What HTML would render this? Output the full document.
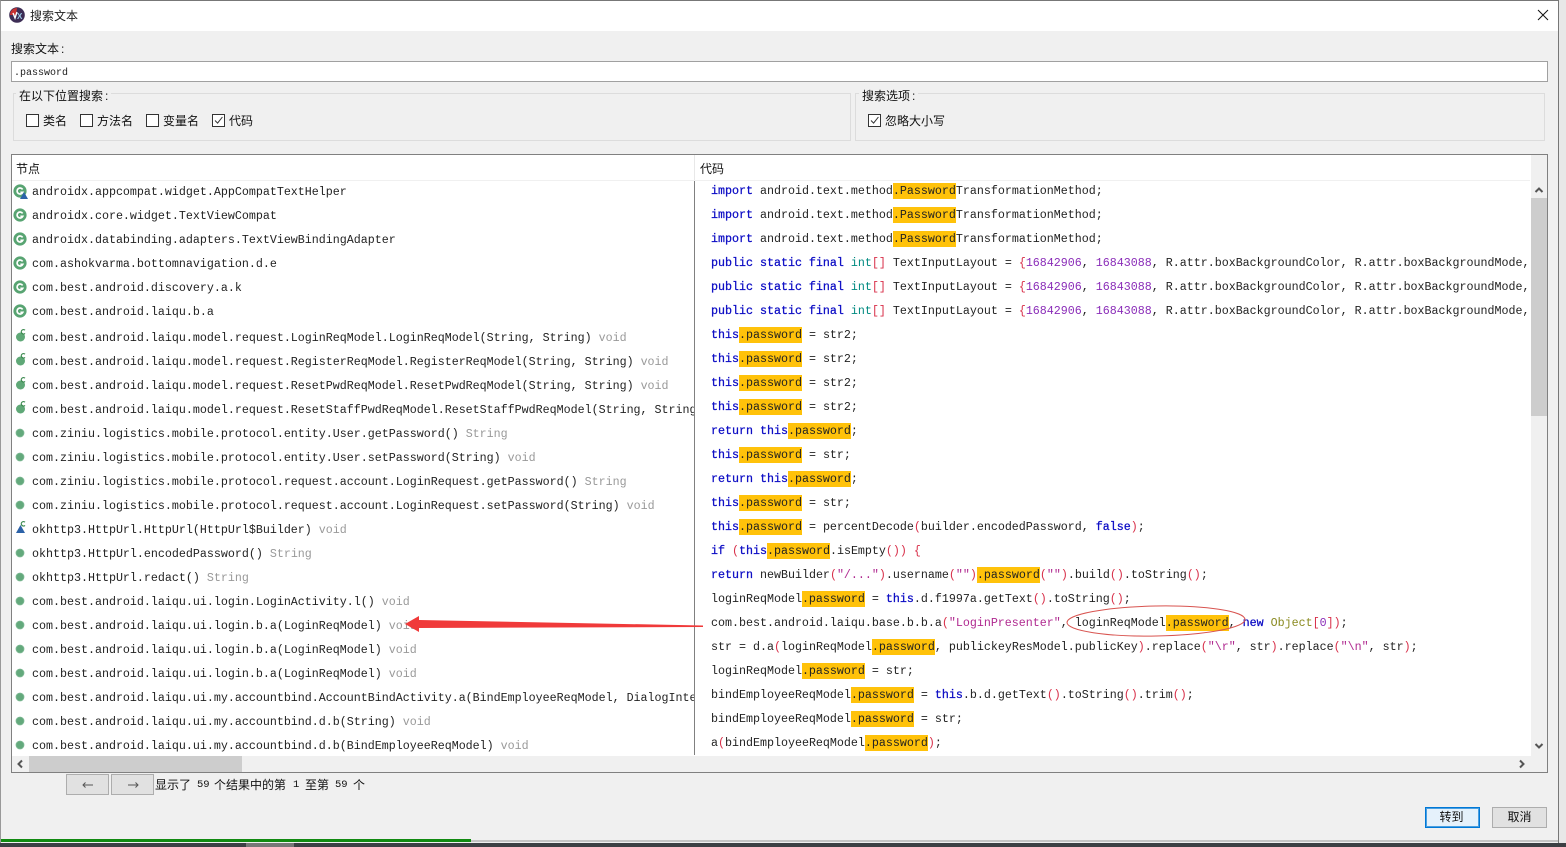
<!DOCTYPE html>
<html><head><meta charset="utf-8"><title>搜索文本</title>
<style>
*{box-sizing:border-box}
html,body{margin:0;padding:0;width:1566px;height:847px;overflow:hidden;background:#e8e8e8}
body{position:relative;font-family:"Liberation Sans","Noto Sans CJK SC",sans-serif;font-size:12px;color:#111}
.a{position:absolute}
.l{position:absolute;white-space:nowrap;line-height:16px;height:16px}
.m{font-family:"Liberation Mono","Noto Sans CJK SC",monospace;font-size:11.67px;white-space:pre;color:#222}
.m i{font-style:normal;color:#999}
.k{color:#0b0bc4;-webkit-text-stroke:.25px #0b0bc4}.t{color:#008a80}.p{color:#d8304a}.n{color:#8a2cb8}.s{color:#b02a90}.o{color:#8a8a20}
.h{background:#ffc20a;display:inline-block;height:16px;color:#222}
.cb{position:absolute;width:13px;height:13px;border:1px solid #333;background:#fff}
.btn{position:absolute;border:1px solid #adadad;background:#e1e1e1;text-align:center}
.grp{position:absolute;border:1px solid #dcdcdc;top:93px;height:48px}
.f{font-family:"Liberation Mono",monospace;font-size:10.5px}
.c{margin-left:2px}
</style></head><body>

<svg width="0" height="0" style="position:absolute"><defs>
<symbol id="g" viewBox="0 0 14 14"><circle cx="7" cy="7" r="6.6" fill="#58a472"/><path d="M9.600 5.400A3 3 0 1 0 9.800 8.300H7.400" fill="none" stroke="#fff" stroke-width="1.7"/></symbol>
<symbol id="d" viewBox="0 0 10 10"><circle cx="5" cy="5" r="4" fill="#63a97c" stroke="#7fb995" stroke-width=".8"/></symbol>
<symbol id="c" viewBox="0 0 12 16"><circle cx="5.500" cy="9" r="4.500" fill="#5fa877"/><path d="M10 2.200A2.200 2.200 0 1 0 10 5.400" fill="none" stroke="#3d8a50" stroke-width="1.200"/></symbol>
<symbol id="b" viewBox="0 0 12 16"><path d="M1 13L5.500 5 10 13z" fill="#2c62a8"/><path d="M10 2.200A2.200 2.200 0 1 0 10 5.400" fill="none" stroke="#3d8a50" stroke-width="1.200"/></symbol>
</defs></svg>

<!-- window -->
<div class="a" style="left:0;top:0;width:1559px;height:843px;background:#f0f0f0;border:1px solid #777;border-bottom:none;border-left-color:#999"></div>
<div class="a" style="top:1px;left:1px;width:1557px;height:30px;background:#fff"></div>
<div class="a" style="left:1px;top:839px;width:470px;height:3px;background:#118a11"></div>
<div class="a" style="left:471px;top:840px;width:1087px;height:2px;background:#c4c4c4"></div>
<div class="a" style="left:0;top:843px;width:1566px;height:4px;background:#3c4044"></div>
<div class="a" style="left:246px;top:843px;width:48px;height:4px;background:#777"></div>

<!-- title -->
<svg class="a" style="left:9px;top:7px" width="16" height="16" viewBox="0 0 16 16"><circle cx="8" cy="8" r="7.800" fill="#3d2d55"/><path d="M1 8a7 7 0 0 1 7-7L7 8z" fill="#c83232"/><path d="M4 6l2 5 2-6" fill="none" stroke="#fff" stroke-width="1.400"/><text x="8" y="12" font-family="Liberation Sans" font-size="8" font-weight="bold" fill="#9ccbe8">X</text></svg>
<div class="l" style="left:30px;top:8px;color:#222">搜索文本</div>
<svg class="a" style="left:1537px;top:9px" width="12" height="12" viewBox="0 0 12 12"><path d="M1 1l10 10M11 1L1 11" stroke="#111" stroke-width="1" fill="none"/></svg>

<!-- search -->
<div class="l" style="left:11px;top:41px">搜索文本<span class="c">:</span></div>
<div class="a" style="left:11px;top:61px;width:1537px;height:21px;background:#fff;border:1px solid #a0a0a0"></div>
<div class="l" style="left:14px;top:66px;font-family:'Liberation Mono',monospace;font-size:10px;color:#222">.password</div>

<!-- groups -->
<div class="grp" style="left:13px;width:838px"></div>
<div class="grp" style="left:855px;width:690px"></div>
<div class="l" style="left:16px;top:88px;background:#f0f0f0;padding:0 3px">在以下位置搜索<span class="c">:</span></div>
<div class="l" style="left:859px;top:88px;background:#f0f0f0;padding:0 3px">搜索选项<span class="c">:</span></div>
<div class="cb" style="left:26px;top:114px"></div><div class="l" style="left:43px;top:113px">类名</div>
<div class="cb" style="left:80px;top:114px"></div><div class="l" style="left:97px;top:113px">方法名</div>
<div class="cb" style="left:146px;top:114px"></div><div class="l" style="left:163px;top:113px">变量名</div>
<div class="cb" style="left:212px;top:114px"><svg class="a" style="left:0;top:0" width="11" height="11" viewBox="0 0 11 11"><path d="M2 5.500l2.600 2.600L9.400 2" fill="none" stroke="#333" stroke-width="1"/></svg></div><div class="l" style="left:229px;top:113px">代码</div>
<div class="cb" style="left:868px;top:114px"><svg class="a" style="left:0;top:0" width="11" height="11" viewBox="0 0 11 11"><path d="M2 5.500l2.600 2.600L9.400 2" fill="none" stroke="#333" stroke-width="1"/></svg></div><div class="l" style="left:885px;top:113px">忽略大小写</div>

<!-- results -->
<div class="a" style="left:11px;top:154px;width:1537px;height:619px;background:#fff;border:1px solid #808080"></div>
<div class="a" style="left:12px;top:180px;width:1518px;height:1px;background:#f0f0f0"></div>
<div class="a" style="left:694px;top:155px;width:1px;height:25px;background:#e8e8e8"></div>
<div class="a" style="left:694px;top:181px;width:1px;height:574px;background:#808080"></div>
<div class="l" style="left:16px;top:161px">节点</div>
<div class="l" style="left:700px;top:161px">代码</div>

<!-- vertical scrollbar -->
<div class="a" style="left:1531px;top:155px;width:16px;height:601px;background:#f0f0f0"></div>
<div class="a" style="left:1531px;top:198px;width:16px;height:218px;background:#cdcdcd"></div>
<svg class="a" style="left:1534px;top:186px" width="10" height="8" viewBox="0 0 10 8"><path d="M1.500 6L5 2.500 8.500 6" fill="none" stroke="#555" stroke-width="2"/></svg>
<svg class="a" style="left:1534px;top:742px" width="10" height="8" viewBox="0 0 10 8"><path d="M1.500 2L5 5.500 8.500 2" fill="none" stroke="#555" stroke-width="2"/></svg>
<!-- horizontal scrollbar -->
<div class="a" style="left:12px;top:756px;width:1535px;height:16px;background:#f0f0f0"></div>
<div class="a" style="left:29px;top:756px;width:213px;height:16px;background:#cdcdcd"></div>
<svg class="a" style="left:16px;top:759px" width="8" height="10" viewBox="0 0 8 10"><path d="M6 1.500L2.500 5 6 8.500" fill="none" stroke="#555" stroke-width="2"/></svg>
<svg class="a" style="left:1518px;top:759px" width="8" height="10" viewBox="0 0 8 10"><path d="M2 1.500L5.500 5 2 8.500" fill="none" stroke="#555" stroke-width="2"/></svg>

<!-- left list -->
<div class="a" style="left:12px;top:181px;width:682px;height:575px;overflow:hidden">
<svg class="a" style="left:1px;top:3px" width="14" height="14"><use href="#g"/></svg><svg class="a" style="left:8px;top:11px" width="8" height="7" viewBox="0 0 8 7"><path d="M0 7L4 0l4 7z" fill="#2c62a8"/></svg>
<svg class="a" style="left:1px;top:27px" width="14" height="14"><use href="#g"/></svg>
<svg class="a" style="left:1px;top:51px" width="14" height="14"><use href="#g"/></svg>
<svg class="a" style="left:1px;top:75px" width="14" height="14"><use href="#g"/></svg>
<svg class="a" style="left:1px;top:99px" width="14" height="14"><use href="#g"/></svg>
<svg class="a" style="left:1px;top:123px" width="14" height="14"><use href="#g"/></svg>
<svg class="a" style="left:3px;top:147px" width="12" height="16"><use href="#c"/></svg>
<svg class="a" style="left:3px;top:171px" width="12" height="16"><use href="#c"/></svg>
<svg class="a" style="left:3px;top:195px" width="12" height="16"><use href="#c"/></svg>
<svg class="a" style="left:3px;top:219px" width="12" height="16"><use href="#c"/></svg>
<svg class="a" style="left:3px;top:247px" width="10" height="10"><use href="#d"/></svg>
<svg class="a" style="left:3px;top:271px" width="10" height="10"><use href="#d"/></svg>
<svg class="a" style="left:3px;top:295px" width="10" height="10"><use href="#d"/></svg>
<svg class="a" style="left:3px;top:319px" width="10" height="10"><use href="#d"/></svg>
<svg class="a" style="left:3px;top:339px" width="12" height="16"><use href="#b"/></svg>
<svg class="a" style="left:3px;top:367px" width="10" height="10"><use href="#d"/></svg>
<svg class="a" style="left:3px;top:391px" width="10" height="10"><use href="#d"/></svg>
<svg class="a" style="left:3px;top:415px" width="10" height="10"><use href="#d"/></svg>
<svg class="a" style="left:3px;top:439px" width="10" height="10"><use href="#d"/></svg>
<svg class="a" style="left:3px;top:463px" width="10" height="10"><use href="#d"/></svg>
<svg class="a" style="left:3px;top:487px" width="10" height="10"><use href="#d"/></svg>
<svg class="a" style="left:3px;top:511px" width="10" height="10"><use href="#d"/></svg>
<svg class="a" style="left:3px;top:535px" width="10" height="10"><use href="#d"/></svg>
<svg class="a" style="left:3px;top:559px" width="10" height="10"><use href="#d"/></svg>
<div class="l m" style="left:20px;top:3px">androidx.appcompat.widget.AppCompatTextHelper</div>
<div class="l m" style="left:20px;top:27px">androidx.core.widget.TextViewCompat</div>
<div class="l m" style="left:20px;top:51px">androidx.databinding.adapters.TextViewBindingAdapter</div>
<div class="l m" style="left:20px;top:75px">com.ashokvarma.bottomnavigation.d.e</div>
<div class="l m" style="left:20px;top:99px">com.best.android.discovery.a.k</div>
<div class="l m" style="left:20px;top:123px">com.best.android.laiqu.b.a</div>
<div class="l m" style="left:20px;top:149px">com.best.android.laiqu.model.request.LoginReqModel.LoginReqModel(String, String) <i>void</i></div>
<div class="l m" style="left:20px;top:173px">com.best.android.laiqu.model.request.RegisterReqModel.RegisterReqModel(String, String) <i>void</i></div>
<div class="l m" style="left:20px;top:197px">com.best.android.laiqu.model.request.ResetPwdReqModel.ResetPwdReqModel(String, String) <i>void</i></div>
<div class="l m" style="left:20px;top:221px">com.best.android.laiqu.model.request.ResetStaffPwdReqModel.ResetStaffPwdReqModel(String, String) <i>void</i></div>
<div class="l m" style="left:20px;top:245px">com.ziniu.logistics.mobile.protocol.entity.User.getPassword() <i>String</i></div>
<div class="l m" style="left:20px;top:269px">com.ziniu.logistics.mobile.protocol.entity.User.setPassword(String) <i>void</i></div>
<div class="l m" style="left:20px;top:293px">com.ziniu.logistics.mobile.protocol.request.account.LoginRequest.getPassword() <i>String</i></div>
<div class="l m" style="left:20px;top:317px">com.ziniu.logistics.mobile.protocol.request.account.LoginRequest.setPassword(String) <i>void</i></div>
<div class="l m" style="left:20px;top:341px">okhttp3.HttpUrl.HttpUrl(HttpUrl$Builder) <i>void</i></div>
<div class="l m" style="left:20px;top:365px">okhttp3.HttpUrl.encodedPassword() <i>String</i></div>
<div class="l m" style="left:20px;top:389px">okhttp3.HttpUrl.redact() <i>String</i></div>
<div class="l m" style="left:20px;top:413px">com.best.android.laiqu.ui.login.LoginActivity.l() <i>void</i></div>
<div class="l m" style="left:20px;top:437px">com.best.android.laiqu.ui.login.b.a(LoginReqModel) <i>void</i></div>
<div class="l m" style="left:20px;top:461px">com.best.android.laiqu.ui.login.b.a(LoginReqModel) <i>void</i></div>
<div class="l m" style="left:20px;top:485px">com.best.android.laiqu.ui.login.b.a(LoginReqModel) <i>void</i></div>
<div class="l m" style="left:20px;top:509px">com.best.android.laiqu.ui.my.accountbind.AccountBindActivity.a(BindEmployeeReqModel, DialogInterface) <i>void</i></div>
<div class="l m" style="left:20px;top:533px">com.best.android.laiqu.ui.my.accountbind.d.b(String) <i>void</i></div>
<div class="l m" style="left:20px;top:557px">com.best.android.laiqu.ui.my.accountbind.d.b(BindEmployeeReqModel) <i>void</i></div>
</div>

<!-- code -->
<div class="a" style="left:695px;top:181px;width:835px;height:575px;overflow:hidden">
<div class="l m" style="left:16px;top:2px"><span class="k">import</span> android.text.method<span class="h">.Password</span>TransformationMethod;</div>
<div class="l m" style="left:16px;top:26px"><span class="k">import</span> android.text.method<span class="h">.Password</span>TransformationMethod;</div>
<div class="l m" style="left:16px;top:50px"><span class="k">import</span> android.text.method<span class="h">.Password</span>TransformationMethod;</div>
<div class="l m" style="left:16px;top:74px"><span class="k">public static final</span> <span class="t">int</span><span class="p">[]</span> TextInputLayout = <span class="p">{</span><span class="n">16842906</span>, <span class="n">16843088</span>, R.attr.boxBackgroundColor, R.attr.boxBackgroundMode, R.attr</div>
<div class="l m" style="left:16px;top:98px"><span class="k">public static final</span> <span class="t">int</span><span class="p">[]</span> TextInputLayout = <span class="p">{</span><span class="n">16842906</span>, <span class="n">16843088</span>, R.attr.boxBackgroundColor, R.attr.boxBackgroundMode, R.attr</div>
<div class="l m" style="left:16px;top:122px"><span class="k">public static final</span> <span class="t">int</span><span class="p">[]</span> TextInputLayout = <span class="p">{</span><span class="n">16842906</span>, <span class="n">16843088</span>, R.attr.boxBackgroundColor, R.attr.boxBackgroundMode, R.attr</div>
<div class="l m" style="left:16px;top:146px"><span class="k">this</span><span class="h">.password</span> = str2;</div>
<div class="l m" style="left:16px;top:170px"><span class="k">this</span><span class="h">.password</span> = str2;</div>
<div class="l m" style="left:16px;top:194px"><span class="k">this</span><span class="h">.password</span> = str2;</div>
<div class="l m" style="left:16px;top:218px"><span class="k">this</span><span class="h">.password</span> = str2;</div>
<div class="l m" style="left:16px;top:242px"><span class="k">return this</span><span class="h">.password</span>;</div>
<div class="l m" style="left:16px;top:266px"><span class="k">this</span><span class="h">.password</span> = str;</div>
<div class="l m" style="left:16px;top:290px"><span class="k">return this</span><span class="h">.password</span>;</div>
<div class="l m" style="left:16px;top:314px"><span class="k">this</span><span class="h">.password</span> = str;</div>
<div class="l m" style="left:16px;top:338px"><span class="k">this</span><span class="h">.password</span> = percentDecode<span class="p">(</span>builder.encodedPassword, <span class="k">false</span><span class="p">)</span>;</div>
<div class="l m" style="left:16px;top:362px"><span class="k">if</span> <span class="p">(</span><span class="k">this</span><span class="h">.password</span>.isEmpty<span class="p">())</span> <span class="p">{</span></div>
<div class="l m" style="left:16px;top:386px"><span class="k">return</span> newBuilder<span class="p">(</span><span class="s">"/..."</span><span class="p">)</span>.username<span class="p">(</span><span class="s">""</span><span class="p">)</span><span class="h">.password</span><span class="p">(</span><span class="s">""</span><span class="p">)</span>.build<span class="p">()</span>.toString<span class="p">()</span>;</div>
<div class="l m" style="left:16px;top:410px">loginReqModel<span class="h">.password</span> = <span class="k">this</span>.d.f1997a.getText<span class="p">()</span>.toString<span class="p">()</span>;</div>
<div class="l m" style="left:16px;top:434px">com.best.android.laiqu.base.b.b.a<span class="p">(</span><span class="s">"LoginPresenter"</span>, loginReqModel<span class="h">.password</span>, <span class="k">new</span> <span class="o">Object</span><span class="p">[</span><span class="n">0</span><span class="p">])</span>;</div>
<div class="l m" style="left:16px;top:458px">str = d.a<span class="p">(</span>loginReqModel<span class="h">.password</span>, publickeyResModel.publicKey<span class="p">)</span>.replace<span class="p">(</span><span class="s">"\r"</span>, str<span class="p">)</span>.replace<span class="p">(</span><span class="s">"\n"</span>, str<span class="p">)</span>;</div>
<div class="l m" style="left:16px;top:482px">loginReqModel<span class="h">.password</span> = str;</div>
<div class="l m" style="left:16px;top:506px">bindEmployeeReqModel<span class="h">.password</span> = <span class="k">this</span>.b.d.getText<span class="p">()</span>.toString<span class="p">()</span>.trim<span class="p">()</span>;</div>
<div class="l m" style="left:16px;top:530px">bindEmployeeReqModel<span class="h">.password</span> = str;</div>
<div class="l m" style="left:16px;top:554px">a<span class="p">(</span>bindEmployeeReqModel<span class="h">.password</span><span class="p">)</span>;</div>
</div>

<!-- annotations -->
<svg class="a" style="left:0;top:0;pointer-events:none" width="1566" height="847">
<ellipse cx="1156" cy="621" rx="89" ry="15" transform="rotate(-1 1156 621)" fill="none" stroke="#d8534f" stroke-width="1"/>
<path d="M405 624L419 616 419 620 703 625.500 703 627 419 628 419 632Z" fill="#f03a3a"/>
</svg>

<!-- pager -->
<div class="btn" style="left:66px;top:774px;width:43px;height:21px"><svg class="a" style="left:14px;top:6px" width="14" height="8" viewBox="0 0 14 8"><path d="M4.500 1.500L2 4l2.500 2.500M2 4h10" fill="none" stroke="#555"/></svg></div>
<div class="btn" style="left:111px;top:774px;width:43px;height:21px"><svg class="a" style="left:14px;top:6px" width="14" height="8" viewBox="0 0 14 8"><path d="M9.500 1.500L12 4 9.500 6.500M2 4h10" fill="none" stroke="#555"/></svg></div>
<div class="l" style="left:155px;top:777px">显示了</div>
<div class="l f" style="left:197px;top:777px">59</div>
<div class="l" style="left:214px;top:777px">个结果中的第</div>
<div class="l f" style="left:293px;top:777px">1</div>
<div class="l" style="left:305px;top:777px">至第</div>
<div class="l f" style="left:335px;top:777px">59</div>
<div class="l" style="left:353px;top:777px">个</div>

<!-- dialog buttons -->
<div class="btn" style="left:1425px;top:807px;width:55px;height:21px;background:#e5f1fb;border:1px solid #0078d7;box-shadow:inset 0 0 0 1px #4a9fe0;line-height:19px;padding-right:2px">转到</div>
<div class="btn" style="left:1492px;top:807px;width:55px;height:21px;line-height:19px">取消</div>
</body></html>
